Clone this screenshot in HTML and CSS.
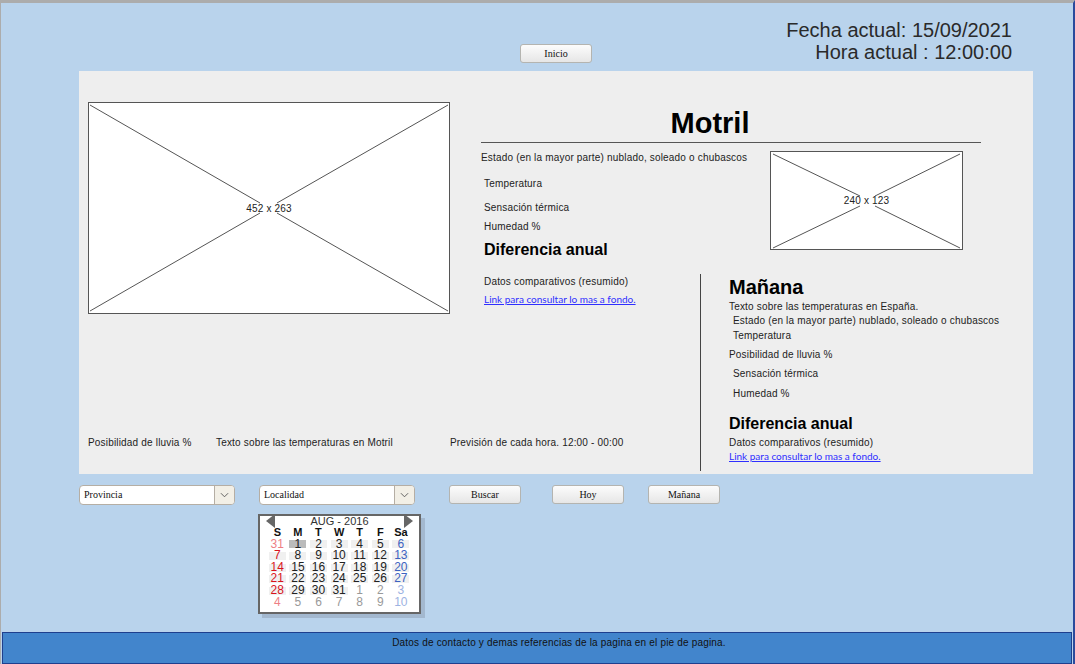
FILE: index.html
```html
<!DOCTYPE html>
<html lang="es">
<head>
  <meta charset="UTF-8" />
  <title>Motril - Tiempo</title>
  <link rel="stylesheet" href="styles.css">
</head>
<body>
  <div class="page">

    <header class="top">
      <button class="btn" type="button">Inicio</button>
      <div class="now">Fecha actual: 15/09/2021<br>Hora actual : 12:00:00</div>
    </header>

    <main class="panel">
      <svg class="ph hero" viewBox="0 0 362 212">
        <rect x="0.5" y="0.5" width="361" height="211" />
        <line x1="2" y1="3" x2="172" y2="101" />
        <line x1="360" y1="3" x2="189" y2="101" />
        <line x1="2" y1="209" x2="172" y2="111" />
        <line x1="360" y1="209" x2="189" y2="111" />
        <text x="181" y="110">452 x 263</text>
      </svg>

      <section class="city">
        <h1>Motril</h1>
        <div class="city-body">
          <div class="city-info">
            <p class="line">Estado (en la mayor parte) nublado, soleado o chubascos</p>
            <p class="line in gap-12">Temperatura</p>
            <p class="line in gap-10">Sensación térmica</p>
            <p class="line in gap-5">Humedad %</p>
            <h3 class="in gap-6">Diferencia anual</h3>
          </div>
          <svg class="ph thumb" viewBox="0 0 193 99">
            <rect x="0.5" y="0.5" width="192" height="98" />
            <line x1="3" y1="3" x2="90" y2="45" />
            <line x1="190" y1="3" x2="105" y2="45" />
            <line x1="3" y1="97" x2="90" y2="55" />
            <line x1="190" y1="97" x2="105" y2="55" />
            <text x="96.5" y="53">240 x 123</text>
          </svg>
        </div>
      </section>

      <section class="compare">
        <p class="line">Datos comparativos (resumido)</p>
        <a class="link gap-3" href="#">Link para consultar lo mas a fondo.</a>
      </section>

      <section class="tomorrow">
        <h2>Mañana</h2>
        <p class="line">Texto sobre las temperaturas en España.</p>
        <p class="line in">Estado (en la mayor parte) nublado, soleado o chubascos</p>
        <p class="line in gap-1">Temperatura</p>
        <p class="line gap-5">Posibilidad de lluvia %</p>
        <p class="line in gap-5">Sensación térmica</p>
        <p class="line in gap-6">Humedad %</p>
        <h3 class="gap-13">Diferencia anual</h3>
        <p class="line gap-2">Datos comparativos (resumido)</p>
        <a class="link tight" href="#">Link para consultar lo mas a fondo.</a>
      </section>

      <div class="notes">
        <p class="line">Posibilidad de lluvia %</p>
        <p class="line">Texto sobre las temperaturas en Motril</p>
        <p class="line">Previsión de cada hora. 12:00 - 00:00</p>
      </div>
    </main>

    <div class="controls">
      <div class="select"><span>Provincia</span><i class="arrow"><svg viewBox="0 0 10 6"><path d="M1 1l4 4 4-4" /></svg></i></div>
      <div class="loc-col">
        <div class="select"><span>Localidad</span><i class="arrow"><svg viewBox="0 0 10 6"><path d="M1 1l4 4 4-4" /></svg></i></div>
        <div class="calendar">
          <div class="cal-head"><i class="prev"></i><span>AUG - 2016</span><i class="next"></i></div>
          <div class="cal-grid">
            <b>S</b><b>M</b><b>T</b><b>W</b><b>T</b><b>F</b><b>Sa</b>
            <span class="sun faint">31</span><span class="sel">1</span><span>2</span><span>3</span><span>4</span><span>5</span><span class="sat">6</span>
            <span class="sun">7</span><span>8</span><span>9</span><span>10</span><span>11</span><span>12</span><span class="sat">13</span>
            <span class="sun">14</span><span>15</span><span>16</span><span>17</span><span>18</span><span>19</span><span class="sat">20</span>
            <span class="sun">21</span><span>22</span><span>23</span><span>24</span><span>25</span><span>26</span><span class="sat">27</span>
            <span class="sun">28</span><span>29</span><span>30</span><span>31</span><span class="out">1</span><span class="out">2</span><span class="out sat-out">3</span>
            <span class="out sun-out">4</span><span class="out">5</span><span class="out">6</span><span class="out">7</span><span class="out">8</span><span class="out">9</span><span class="out sat-out">10</span>
          </div>
        </div>
      </div>
      <button class="btn buscar" type="button">Buscar</button>
      <button class="btn hoy" type="button">Hoy</button>
      <button class="btn manana" type="button">Mañana</button>
    </div>

    <footer class="foot">Datos de contacto y demas referencias de la pagina en el pie de pagina.</footer>
  </div>
</body>
</html>
```

FILE: styles.css
```css
* {
  box-sizing: border-box;
}
html, body {
  margin: 0;
  padding: 0;
}
body {
  font-family: "Liberation Sans", Arial, sans-serif;
  font-size: 10px;
  color: #222;
}
p, h1, h2, h3 {
  margin: 0;
}

.page {
  width: 1075px;
  height: 664px;
  display: flex;
  flex-direction: column;
  background: #b9d3ec;
  border-top: 3px solid #acacac;
  border-left: 1px solid #acacac;
  border-right: 2px solid #2b4a9c;
  overflow: hidden;
}

/* top bar */
.top {
  height: 68px;
  display: grid;
  grid-template-columns: 519px 72px 1fr;
  padding: 16px 61px 8px 0;
}
.top .btn {
  grid-column: 2;
  align-self: end;
  height: 19px;
}
.now {
  font-size: 20px;
  line-height: 22px;
  text-align: right;
  color: #2a2a2a;
}

.btn {
  font-family: "Liberation Serif", serif;
  font-size: 10px;
  color: #111;
  width: 72px;
  height: 19px;
  padding: 0;
  border: 1px solid #b4b4b0;
  border-radius: 3px;
  background: linear-gradient(#fcfcfc, #e6e6e6);
}

/* main panel */
.panel {
  margin-left: 78px;
  width: 954px;
  height: 403px;
  flex: none;
  padding: 31px 0 3px 9px;
  background: #eee;
  display: grid;
  grid-template-columns: 393px 219px 1fr;
  grid-template-rows: 172px 161px 36px;
}
.ph {
  display: block;
  background: #fff;
}
.ph rect {
  fill: none;
  stroke: #555;
}
.ph line {
  stroke: #555;
}
.ph text {
  font-size: 10px;
  letter-spacing: .2px;
  text-anchor: middle;
  fill: #222;
}
.hero {
  grid-column: 1;
  grid-row: 1 / 3;
  width: 362px;
  height: 212px;
}
.thumb {
  width: 193px;
  height: 99px;
}

.city {
  grid-column: 2 / 4;
  grid-row: 1;
}
.city h1 {
  width: 458px;
  height: 40px;
  font-size: 29px;
  line-height: 42px;
  text-align: center;
  color: #000;
}
.city-body {
  width: 500px;
  border-top: 1px solid #555;
  display: flex;
  padding-top: 8px;
}
.city-info {
  width: 289px;
}
.line {
  font-size: 10px;
  line-height: 14px;
  letter-spacing: .18px;
  white-space: nowrap;
}
.in {
  margin-left: 3px;
}
h3 {
  font-size: 16px;
  line-height: 20px;
  color: #000;
}
h2 {
  font-size: 20px;
  line-height: 24px;
  color: #000;
  margin: 1px 0;
}
.gap-1 { margin-top: 1px; }
.gap-2 { margin-top: 2px; }
.gap-3 { margin-top: 3px; }
.gap-5 { margin-top: 5px; }
.gap-6 { margin-top: 6px; }
.gap-10 { margin-top: 10px; }
.gap-12 { margin-top: 12px; }
.gap-13 { margin-top: 13px; }

.link {
  display: block;
  font-family: "Lato", sans-serif;
  font-size: 10px;
  line-height: 14px;
  color: #2f2fff;
  white-space: nowrap;
}
.tight {
  margin-top: -1px;
}

.compare {
  grid-column: 2;
  grid-row: 2;
  padding: 1px 0 0 3px;
}
.tomorrow {
  grid-column: 3;
  grid-row: 2 / 4;
  border-left: 1px solid #444;
  padding-left: 28px;
}
.tomorrow .in {
  margin-left: 4px;
}
.notes {
  grid-column: 1 / 3;
  grid-row: 3;
  display: grid;
  grid-template-columns: 128px 234px auto;
  align-content: start;
  padding-top: 1px;
}

/* search row */
.controls {
  flex: 1;
  margin: 11px 0 0 78px;
  display: flex;
  align-items: flex-start;
}
.select {
  width: 156px;
  height: 20px;
  display: flex;
  background: #fff;
  border: 1px solid #b5aea4;
  border-radius: 4px;
  font-family: "Liberation Serif", serif;
  font-size: 10px;
  line-height: 18px;
  color: #111;
}
.select span {
  flex: 1;
  padding-left: 4px;
}
.arrow {
  width: 20px;
  display: flex;
  align-items: center;
  justify-content: center;
  background: #f2efe6;
  border-left: 1px solid #b5aea4;
  border-radius: 0 3px 3px 0;
}
.arrow svg {
  width: 9px;
  height: 6px;
}
.arrow path {
  fill: none;
  stroke: #555;
}
.loc-col {
  margin-left: 24px;
  width: 163px;
}
.buscar {
  margin-left: 27px;
}
.hoy {
  margin-left: 31px;
}
.manana {
  margin-left: 24px;
}

/* calendar popup */
.calendar {
  width: 163px;
  height: 100px;
  margin: 9px 0 0 -1px;
  background: #fff;
  border: 2px solid #666;
  box-shadow: 4px 4px 0 #a3b8cf;
  padding: 0 0 0 7px;
}
.cal-head {
  position: relative;
  height: 11px;
  margin-left: -7px;
  font-size: 11px;
  line-height: 10px;
  text-align: center;
  color: #333;
}
.prev, .next {
  position: absolute;
  top: -2px;
  width: 0;
  height: 0;
  border-top: 7px solid transparent;
  border-bottom: 7px solid transparent;
}
.prev {
  left: 6px;
  border-right: 9px solid #666;
}
.next {
  right: 6px;
  border-left: 9px solid #666;
}
.cal-grid {
  display: grid;
  grid-template-columns: repeat(7, 20.6px);
  grid-auto-rows: 11.6px;
  font-size: 12px;
  line-height: 11.6px;
  text-align: center;
  color: #222;
}
.cal-grid b {
  font-size: 11px;
  color: #111;
}
.cal-grid span {
  background: linear-gradient(#f0f0f0, #f0f0f0) center / 17px 8px no-repeat;
}
.cal-grid .sel {
  background-image: linear-gradient(#bbb, #bbb);
}
.cal-grid .sun {
  color: #d8141c;
}
.cal-grid .faint {
  color: #ee7f85;
  background: none;
}
.cal-grid .sat {
  color: #3c62c0;
}
.cal-grid .out {
  background: none;
  color: #999;
}
.cal-grid .sat-out {
  color: #9db2e2;
}
.cal-grid .sun-out {
  color: #ee7f85;
}

/* footer */
.foot {
  flex: none;
  height: 32px;
  margin: 0 1px;
  padding-left: 44px;
  background: #4285cc;
  border: 1px solid #1e3f8e;
  font-size: 10px;
  letter-spacing: .18px;
  line-height: 20px;
  text-align: center;
  color: #111;
}
```
